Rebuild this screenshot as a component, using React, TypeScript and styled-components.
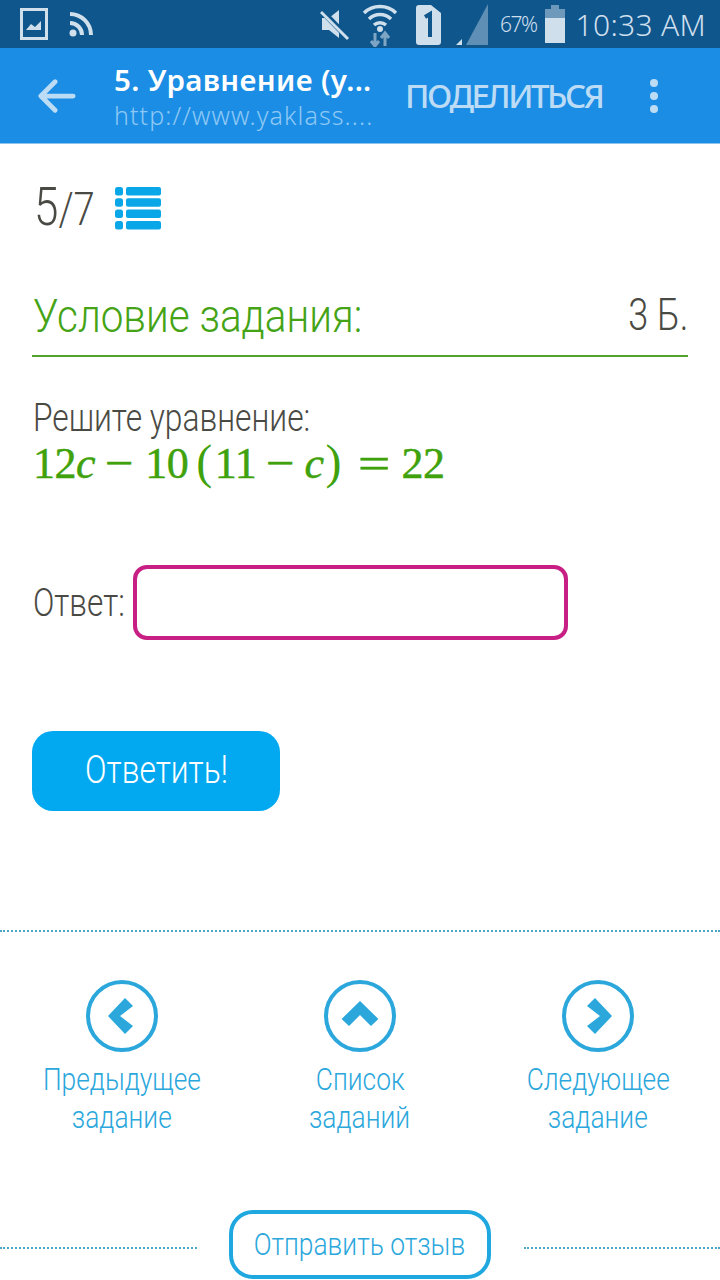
import React from "react";
import styled, { createGlobalStyle } from "styled-components";

const Global = createGlobalStyle`
  html, body { margin: 0; padding: 0; background: #fff; }
  body { font-family: Roboto, "Liberation Sans", sans-serif; }
  #root { width: 720px; height: 1280px; overflow: hidden; }
`;
const Squeeze = styled.span<{ $x: number; $o?: string }>`
  display:inline-block;white-space:nowrap;
  transform:scaleX(${p => p.$x});
  transform-origin:${p => p.$o ?? "left"} center;
`;
const Page = styled.div`width:720px;height:1280px;display:flex;flex-direction:column;overflow:hidden;background:#fff;`;
const StatusBar = styled.div`height:48px;background:#0e568c;display:flex;align-items:center;padding:0 14px 0 20px;color:#cfdfec;flex:none;`;
const StatusLeft = styled.div`display:flex;align-items:center;gap:21px;flex:1;`;
const StatusRight = styled.div`display:flex;align-items:center;`;
const Percent = styled.span`font:300 21px "Noto Sans",sans-serif;letter-spacing:-1.5px;margin:0 8px 0 12px;`;
const Clock = styled.span`font:300 30px "Noto Sans",sans-serif;letter-spacing:.3px;margin-left:11px;`;
const AppBar = styled.div`height:95px;background:#1b8de4;display:flex;align-items:center;flex:none;border-bottom:1px solid #8cc4ee;box-sizing:content-box;padding-left:38px;`;
const Titles = styled.div`width:291px;flex:none;margin-left:38px;`;
const Title = styled.div`font:600 29.5px/38px "Noto Sans",sans-serif;color:#fff;white-space:nowrap;letter-spacing:.35px;`;
const Url = styled.div`font:300 25px/32px "Noto Sans",sans-serif;color:#8ec8f4;white-space:nowrap;letter-spacing:1.1px;`;
const Share = styled.div`font:500 33px "Noto Sans",sans-serif;color:#bcdcf6;width:196px;flex:none;letter-spacing:-2.5px;white-space:nowrap;`;
const Dots = styled.div`display:flex;flex-direction:column;gap:5px;margin-left:49px;flex:none;`;
const Dot = styled.i`width:8px;height:8px;border-radius:50%;background:#bcdcf6;display:block;`;
const Content = styled.div`flex:none;padding:0 32px;display:flex;flex-direction:column;color:#4a4a44;`;
const Counter = styled.div`display:flex;align-items:center;height:42px;margin-top:43px;padding-left:2px;`;
const CounterText = styled.div`width:81px;font:300 53px/42px Roboto,sans-serif;small{font-size:46px;}`;
const HeadRow = styled.div`display:flex;justify-content:space-between;align-items:center;height:77px;margin-top:49px;border-bottom:2px solid #4fa32c;padding-left:1px;`;
const Heading = styled.div`font:300 47px/1 Roboto,sans-serif;color:#45a316;margin-top:-3px;`;
const Points = styled.div`font:300 44px/1 Roboto,sans-serif;margin-top:-3px;`;
const Task = styled.div`font:300 38px/40px Roboto,sans-serif;margin-top:41px;padding-left:1px;`;
const Formula = styled.div`display:flex;align-items:baseline;font:400 44px/52px "Liberation Serif",serif;color:#3fa20c;white-space:nowrap;margin-top:0;padding-left:1px;letter-spacing:-.5px;-webkit-text-stroke:.5px #3fa20c;i{font-style:italic;}`;
const Op = styled.span<{ $l: number; $r: number }>`margin:0 ${p => p.$r}px 0 ${p => p.$l}px;`;
const Paren = styled.span`font-size:48px;line-height:0;-webkit-text-stroke:0;`;
const AnswerRow = styled.div`display:flex;align-items:center;margin-top:75px;`;
const AnswerLabel = styled.div`width:101px;flex:none;font:300 38px/1 Roboto,sans-serif;padding-left:1px;box-sizing:border-box;`;
const AnswerInput = styled.div`width:435px;height:75px;box-sizing:border-box;border:4px solid #c81f84;border-radius:14px;`;
const Submit = styled.div`width:248px;height:80px;border-radius:21px;background:#03a9f0;color:#fff;font:300 38px/78px Roboto,sans-serif;text-align:center;margin-top:91px;`;
const Dotted = styled.div`border-top:2px dotted #4aa5c6;height:0;`;
const Divider = styled(Dotted)`margin-top:119px;flex:none;`;
const Nav = styled.div`display:grid;grid-template-columns:244px 232px 244px;margin-top:47px;flex:none;`;
const NavItem = styled.div`display:flex;flex-direction:column;align-items:center;color:#2ba7dc;font:300 31px/38px Roboto,sans-serif;text-align:center;`;
const NavLabel = styled.div`margin-top:8px;white-space:nowrap;`;
const Feedback = styled.div`display:flex;align-items:center;margin-top:73px;flex:none;`;
const Rule = styled(Dotted)`flex:1;margin-top:7px;`;
const FeedbackButton = styled.div`width:262px;height:69px;box-sizing:border-box;border:4px solid #1ea8df;border-radius:24px;color:#2ba7dc;font:300 31px/61px Roboto,sans-serif;text-align:center;margin:0 33px 0 32px;flex:none;`;

const Chevron = ({ d }: { d: string }) => (
  <svg width="74" height="74" viewBox="0 0 74 74">
    <circle cx="37" cy="37" r="34" fill="none" stroke="#2ba7dc" strokeWidth="4" />
    <path d={d} fill="#2ba7dc" />
  </svg>
);

export default function App() {
  return (
    <Page>
      <Global />
      <StatusBar>
        <StatusLeft>
          <svg width="28" height="32" viewBox="0 0 28 32">
            <rect x="1.5" y="1.5" width="25" height="29" fill="none" stroke="#cfdfec" strokeWidth="3" />
            <path d="M6 22l5-6 4 3 6-6v9z" fill="#cfdfec" />
          </svg>
          <svg width="24" height="26" viewBox="0 0 24 26" fill="none" stroke="#cfdfec">
            <circle cx="4" cy="22" r="3.5" fill="#cfdfec" stroke="none" />
            <path d="M1 12a12 12 0 0 1 12 12" strokeWidth="4" />
            <path d="M1 3a21 21 0 0 1 21 21" strokeWidth="4" />
          </svg>
        </StatusLeft>
        <StatusRight>
          <svg width="30" height="36" viewBox="0 0 30 36">
            <path d="M2 12h7l10-8v28l-10-8H2z" fill="#cfdfec" />
            <path d="M2 5l27 28" stroke="#0e568c" strokeWidth="6" />
            <path d="M1 6l27 27" stroke="#cfdfec" strokeWidth="3" />
          </svg>
          <svg style={{ marginLeft: 12 }} width="36" height="46" viewBox="0 0 36 46" fill="none">
            <path d="M2 12a23 23 0 0 1 32 0M7 18a16 16 0 0 1 22 0M12 24a9 9 0 0 1 12 0" stroke="#cfdfec" strokeWidth="3.5" />
            <circle cx="18" cy="28" r="3" fill="#cfdfec" />
            <path d="M13 32v13M9 40l4 5 4-5" stroke="#7fa5c4" strokeWidth="3" />
            <path d="M23 45V32M19 37l4-5 4 5" stroke="#7fa5c4" strokeWidth="3" />
          </svg>
          <svg style={{ marginLeft: 17 }} width="26" height="44" viewBox="0 0 26 44">
            <path d="M4 3h12l10 8v29a3 3 0 0 1-3 3H4a3 3 0 0 1-3-3V6a3 3 0 0 1 3-3z" fill="#cfdfec" />
            <path d="M10 15l5-3v23" fill="none" stroke="#0e568c" strokeWidth="4" />
          </svg>
          <svg style={{ marginLeft: 15 }} width="32" height="44" viewBox="0 0 32 44">
            <path d="M32 2v41H10z" fill="#5f8fb5" />
            <path d="M0 43l6-6v6z" fill="#cfdfec" />
          </svg>
          <Percent>67%</Percent>
          <svg width="20" height="40" viewBox="0 0 20 40">
            <rect x="6" y="1" width="8" height="5" fill="#6f99ba" />
            <rect y="5" width="20" height="10" fill="#6f99ba" />
            <rect y="14" width="20" height="25" fill="#cfdfec" />
          </svg>
          <Clock>10:33 AM</Clock>
        </StatusRight>
      </StatusBar>
      <AppBar>
        <svg width="38" height="36" viewBox="0 0 40 36" fill="none" stroke="#bcdcf6" strokeWidth="5" strokeLinecap="round" strokeLinejoin="round">
          <path d="M37 18H4M18 3L3 18l15 15" />
        </svg>
        <Titles>
          <Title>5. Уравнение (у...</Title>
          <Url>http://www.yaklass....</Url>
        </Titles>
        <Share>ПОДЕЛИТЬСЯ</Share>
        <Dots><Dot /><Dot /><Dot /></Dots>
      </AppBar>
      <Content>
        <Counter>
          <CounterText><Squeeze $x={0.83}>5<small>/7</small></Squeeze></CounterText>
          <svg width="46" height="43" viewBox="0 0 46 43" fill="#0aa7e8">
            {[0, 1, 2, 3].map(i => (
              <g key={i}>
                <rect x="0" y={i * 11.3} width="8" height="8.5" rx="2.5" />
                <rect x="11" y={i * 11.3} width="35" height="8.5" rx="2" />
              </g>
            ))}
          </svg>
        </Counter>
        <HeadRow>
          <Heading><Squeeze $x={0.86}>Условие задания:</Squeeze></Heading>
          <Points><Squeeze $x={0.82} $o="right">3 Б.</Squeeze></Points>
        </HeadRow>
        <Task><Squeeze $x={0.835}>Решите уравнение:</Squeeze></Task>
        <Formula>
          <span>12<i>c</i></span>
          <Op $l={10} $r={16}><Squeeze $x={1.15}>−</Squeeze></Op>
          <span>10</span>
          <Op $l={8} $r={3}><Paren>(</Paren></Op>
          <span>11</span>
          <Op $l={10} $r={14}><Squeeze $x={1.15}>−</Squeeze></Op>
          <i>c</i>
          <Op $l={2} $r={17}><Paren>)</Paren></Op>
          <Squeeze $x={1.3}>=</Squeeze>
          <Op $l={19} $r={0}>22</Op>
        </Formula>
        <AnswerRow>
          <AnswerLabel><Squeeze $x={0.83}>Ответ:</Squeeze></AnswerLabel>
          <AnswerInput />
        </AnswerRow>
        <Submit><Squeeze $x={0.835} $o="center">Ответить!</Squeeze></Submit>
      </Content>
      <Divider />
      <Nav>
        <NavItem>
          <Chevron d="M40 19L48 27L35 37L48 47L40 55L23 37Z" />
          <NavLabel><Squeeze $x={0.85} $o="center">Предыдущее</Squeeze><br /><Squeeze $x={0.85} $o="center">задание</Squeeze></NavLabel>
        </NavItem>
        <NavItem>
          <Chevron d="M37 22L55.4 40L48 47L37 36L26 47L18.6 40Z" />
          <NavLabel><Squeeze $x={0.85} $o="center">Список</Squeeze><br /><Squeeze $x={0.85} $o="center">заданий</Squeeze></NavLabel>
        </NavItem>
        <NavItem>
          <Chevron d="M34 19L26 27L39 37L26 47L34 55L51 37Z" />
          <NavLabel><Squeeze $x={0.85} $o="center">Следующее</Squeeze><br /><Squeeze $x={0.85} $o="center">задание</Squeeze></NavLabel>
        </NavItem>
      </Nav>
      <Feedback>
        <Rule />
        <FeedbackButton><Squeeze $x={0.85} $o="center">Отправить отзыв</Squeeze></FeedbackButton>
        <Rule />
      </Feedback>
    </Page>
  );
}
